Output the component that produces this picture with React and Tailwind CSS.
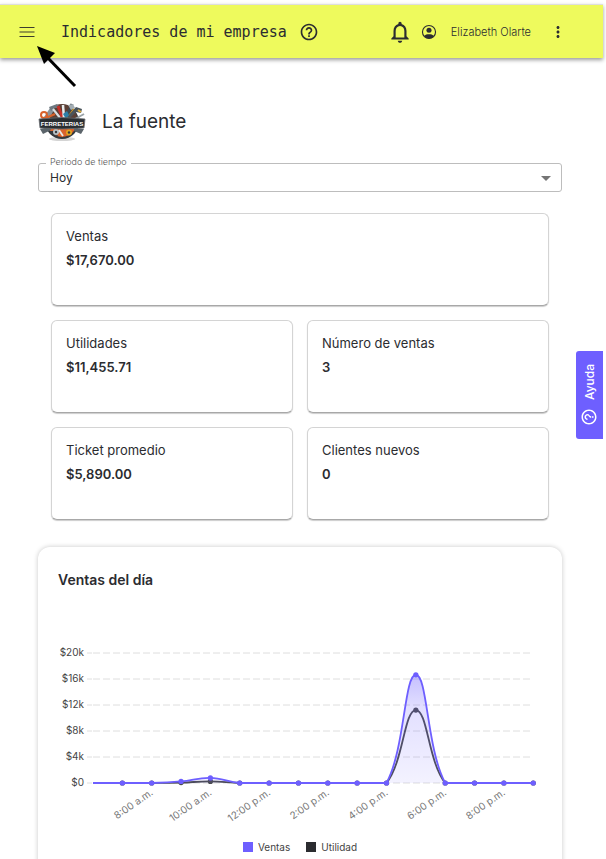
import React, { useState } from "react";
import { MdHelpOutline, MdMoreVert, MdNotificationsNone } from "react-icons/md";

const metrics = [
  { title: "Ventas", value: "$17,670.00", wide: true },
  { title: "Utilidades", value: "$11,455.71" },
  { title: "Número de ventas", value: "3" },
  { title: "Ticket promedio", value: "$5,890.00" },
  { title: "Clientes nuevos", value: "0" },
];

const sales = [0, 0, 0, 240, 780, 0, 0, 0, 0, 0, 0, 16650, 0, 0, 0, 0];
const profit = [0, 0, 0, 60, 240, 0, 0, 0, 0, 0, 0, 11216, 0, 0, 0, 0];
const hours = [
  "8:00 a.m.",
  "10:00 a.m.",
  "12:00 p.m.",
  "2:00 p.m.",
  "4:00 p.m.",
  "6:00 p.m.",
  "8:00 p.m.",
];
const yTicks = [20, 16, 12, 8, 4, 0];

const BASE = 140;
const toX = (i) => 35 + i * 29.35;
const toY = (value) => BASE - (value / 20000) * 130;

// Smooth line through all points, control points never go below the axis
const buildPath = (values) => {
  const pts = values.map((v, i) => [toX(i), toY(v)]);
  const dist = (a, b) => Math.hypot(b[0] - a[0], b[1] - a[1]);
  const controls = pts.map((p, i) => {
    const prev = pts[i - 1] || p;
    const next = pts[i + 1] || p;
    const d1 = dist(prev, p);
    const d2 = dist(p, next);
    const a = (0.4 * d1) / (d1 + d2);
    const b = (0.4 * d2) / (d1 + d2);
    const dx = next[0] - prev[0];
    const dy = next[1] - prev[1];
    return {
      before: [p[0] - a * dx, Math.min(BASE, p[1] - a * dy)],
      after: [p[0] + b * dx, Math.min(BASE, p[1] + b * dy)],
    };
  });

  return pts
    .map((p, i) =>
      i === 0
        ? `M${p}`
        : `C${controls[i - 1].after} ${controls[i].before} ${p}`
    )
    .join(" ");
};

const MenuIcon = () => (
  <svg viewBox="0 0 16 12" className="w-4 h-3" stroke="#3c3d2c" strokeWidth="1.2">
    <path d="M0.5 1.5h15M0.5 6h15M0.5 10.5h15" />
  </svg>
);

const AccountIcon = () => (
  <svg viewBox="0 0 24 24" className="size-4">
    <circle cx="12" cy="12" r="9.8" fill="none" stroke="#2b2c30" strokeWidth="1.7" />
    <circle cx="12" cy="9.3" r="3.8" fill="#2b2c30" />
    <path d="M4.500 18c2-2 4.500-2.600 7.500-2.600s5.500.6 7.500 2.600c-1.800 2.500-4.500 3.800-7.500 3.800s-5.700-1.300-7.500-3.800z" fill="#2b2c30" />
  </svg>
);

const Logo = () => (
  <svg viewBox="0 0 48 40" className="w-12 h-10" role="img" aria-label="Ferreterías">
    <ellipse cx="24" cy="37" rx="13" ry="2" fill="#d4d4d4" />
    <circle cx="24" cy="20" r="17" fill="#33383d" />
    <circle cx="24" cy="20" r="15" fill="#d9622b" />
    <path d="M9 17a15 15 0 0 1 30 0z" fill="#5b4036" />
    {/* tools on top */}
    <path d="M6 15L12 6l4 2-5 9z" fill="#8b949a" />
    <path d="M11 5l8-3 3 3-3 1-2 0-4 3z" fill="#6e7880" />
    <path d="M15 7l8 10" stroke="#dadfe2" strokeWidth="2.2" />
    <path d="M20 4l5 13" stroke="#c63028" strokeWidth="3" />
    <path d="M25 3l1 14" stroke="#e9ecee" strokeWidth="2.5" />
    <path d="M34 2l-6 15" stroke="#3d4952" strokeWidth="3" />
    <path d="M30 3l5-1 2 4-4 2z" fill="#a3adb3" />
    <path d="M36 7l-7 10" stroke="#e0a31f" strokeWidth="2" />
    <path d="M38 5l6 2-1 4-5-1-7 7-2-2z" fill="#4a545b" />
    <path d="M40 8l3 2" stroke="#e2b13a" strokeWidth="2" />
    <circle cx="6" cy="13" r="3" fill="none" stroke="#d9622b" strokeWidth="2" />
    <path d="M8 16l9-4" stroke="#d9622b" strokeWidth="2.2" />
    <path d="M46 12l-9 5" stroke="#9aa3a8" strokeWidth="2" />
    <path d="M25 12l4-3 2 4-3 4z" fill="#2d7fa8" />
    {/* tools below the sign */}
    <path d="M2 27l10-2 1 3-8 4z" fill="#5b646a" />
    <path d="M36 26l10 1-3 5-7-3z" fill="#5b646a" />
    <path d="M11 29l6 0 3 5-5-1z" fill="#33383d" />
    <circle cx="18" cy="30" r="3" fill="#b9c0c4" />
    <circle cx="18" cy="30" r="1.2" fill="#33383d" />
    <path d="M21 28l4 6" stroke="#e5e7e9" strokeWidth="1.8" />
    <circle cx="31" cy="30.5" r="3" fill="#e0a31f" />
    <circle cx="31" cy="30.5" r="1.2" fill="#33383d" />
    <path d="M1 17q23-3 46 0l-1 9q-22 2-44 0z" fill="#292d31" stroke="#6b6f72" strokeWidth="0.8" />
    <text
      x="24"
      y="24"
      textAnchor="middle"
      fontSize="6"
      fontWeight="700"
      fill="#fff"
      fontFamily="'Liberation Sans', sans-serif"
    >
      FERRETERIAS
    </text>
  </svg>
);

const MetricCard = ({ title, value, wide }) => (
  <div
    className={`h-[93px] rounded-md border border-[#d4d4d4] border-b-[#a8a8a8] bg-white px-3.5 pt-2.5 shadow-[0_1px_1px_rgba(0,0,0,0.2)] ${
      wide ? "col-span-2" : ""
    }`}
  >
    <h2 className="text-[13px] leading-6">{title}</h2>
    <p className="text-[13px] leading-6 font-semibold">{value}</p>
  </div>
);

const SalesChart = () => {
  const salesPath = buildPath(sales);
  const profitPath = buildPath(profit);

  return (
    <svg viewBox="0 0 484 184" className="w-full" role="img" aria-label="Ventas del día">
      <defs>
        <linearGradient id="salesFill" x1="0" y1="0" x2="0" y2="1">
          <stop offset="0" stopColor="#6e5fff" stopOpacity="0.4" />
          <stop offset="0.3" stopColor="#6e5fff" stopOpacity="0.2" />
          <stop offset="1" stopColor="#6e5fff" stopOpacity="0.08" />
        </linearGradient>
      </defs>

      {yTicks.map((tick) => (
        <g key={tick}>
          <path d={`M29 ${toY(tick * 1000)}h5`} stroke="#dedede" />
          <path
            d={`M35 ${toY(tick * 1000)}H473`}
            stroke="#dedede"
            strokeDasharray="7 3"
          />
          <text x="26" y={toY(tick * 1000) + 3} textAnchor="end" fontSize="10" fill="#444">
            {tick === 0 ? "$0" : `$${tick}k`}
          </text>
        </g>
      ))}

      <g opacity="0.85">
        <path d={profitPath} fill="none" stroke="#2b2c30" strokeWidth="1.8" />
        {profit.map((v, i) => i > 0 && <circle key={i} cx={toX(i)} cy={toY(v)} r="2.6" fill="#2b2c30" />)}
      </g>

      <path d={`${salesPath}L${toX(0)} ${BASE}Z`} fill="url(#salesFill)" />
      <path d={salesPath} fill="none" stroke="#6e5fff" strokeWidth="1.8" />
      {sales.map((v, i) => i > 0 && <circle key={i} cx={toX(i)} cy={toY(v)} r="2.6" fill="#6e5fff" />)}

      {hours.map((hour, i) => {
        const x = toX(2 + i * 2) + 2;
        return (
          <text
            key={i}
            x={x}
            y="151"
            textAnchor="end"
            fontSize="10"
            fill="#777"
            transform={`rotate(-35 ${x} 151)`}
          >
            {hour}
          </text>
        );
      })}
    </svg>
  );
};

const App = () => {
  const [period, setPeriod] = useState("hoy");

  return (
    <div className="relative min-h-screen bg-white pt-1 pr-[3px] font-[Inter,'Open_Sans',sans-serif] text-[#2b2c30]">
      <header className="flex h-[54px] items-center border-t border-[#dedede] bg-[#eefa5d] pl-[19px] pr-9 shadow-[0_2px_4px_rgba(0,0,0,0.4)]">
        <button aria-label="Menú" className="mr-[26px]">
          <MenuIcon />
        </button>
        <h1 className="font-['DejaVu_Sans_Mono',monospace] text-[15px] leading-5 whitespace-nowrap">
          Indicadores de mi empresa
        </h1>
        <button aria-label="Información" className="ml-3">
          <MdHelpOutline size={20} />
        </button>
        <div className="ml-auto flex items-center">
          <button aria-label="Notificaciones" className="mr-2">
            <MdNotificationsNone size={26} />
          </button>
          <AccountIcon />
          <span className="ml-3.5 text-[11px] leading-4 font-light whitespace-nowrap">
            Elizabeth Olarte
          </span>
          <button aria-label="Más opciones" className="ml-[18px]">
            <MdMoreVert size={18} />
          </button>
        </div>
      </header>

      <main className="pt-11 pr-[41px] pb-5 pl-[38px]">
        <div className="flex items-center gap-4">
          <Logo />
          <p className="text-[19px] leading-6">La fuente</p>
        </div>

        <div className="relative mt-[21px]">
          <label
            htmlFor="period"
            className="absolute left-2 -top-[9px] bg-white px-1 text-[9px] leading-4 font-light text-[#555]"
          >
            Periodo de tiempo
          </label>
          <select
            id="period"
            value={period}
            onChange={(e) => setPeriod(e.target.value)}
            className="block h-[29px] w-full appearance-none rounded-[3px] border border-[#bdbdbd] bg-white pl-[11px] text-xs"
          >
            <option value="hoy">Hoy</option>
            <option value="semana">Esta semana</option>
            <option value="mes">Este mes</option>
          </select>
          <svg
            viewBox="0 0 10 5"
            className="pointer-events-none absolute right-[11px] top-[13px] w-2.5"
            fill="#757575"
          >
            <path d="M0 0h10L5 5z" />
          </svg>
        </div>

        <section className="mt-[21px] grid grid-cols-2 gap-3.5 px-[13px]">
          {metrics.map((metric) => (
            <MetricCard key={metric.title} {...metric} />
          ))}
        </section>

        <section className="mt-[27px] rounded-xl bg-white px-5 pt-[21px] pb-6 shadow-[0_0_5px_rgba(0,0,0,0.22)]">
          <h2 className="mb-[51px] text-sm leading-6 font-semibold">Ventas del día</h2>
          <SalesChart />
          <ul className="mt-3 flex justify-center gap-4 text-[10px] leading-4 text-[#444]">
            <li className="flex items-center gap-[5px]">
              <span className="size-2.5 bg-[#6e5fff]" />
              Ventas
            </li>
            <li className="flex items-center gap-[5px]">
              <span className="size-2.5 bg-[#2b2c30]" />
              Utilidad
            </li>
          </ul>
        </section>
      </main>

      <button className="absolute top-[351px] right-[3px] flex h-[88px] w-[27px] rotate-180 items-center justify-center gap-2 rounded-r-[3px] bg-[#6e5fff] text-xs font-medium text-white [writing-mode:vertical-rl]">
        <MdHelpOutline size={18} className="rotate-90" />
        Ayuda
      </button>

      {/* pointer towards the menu button */}
      <svg viewBox="0 0 42 44" className="pointer-events-none absolute top-[45px] left-9 w-[42px]">
        <path d="M10 11L39 41" stroke="#000" strokeWidth="3" />
        <path d="M1 1L19 8L8 19Z" fill="#000" />
      </svg>
    </div>
  );
};

export default App;
